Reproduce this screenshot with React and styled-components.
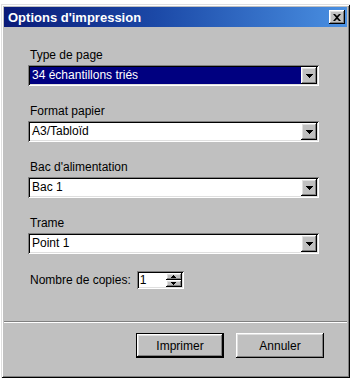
import styled, { createGlobalStyle, css } from 'styled-components'

const Global = createGlobalStyle`
  html, body {
    margin: 0;
    padding: 0;
    background: #ffffff;
  }
  body {
    font-family: "Liberation Sans", Arial, sans-serif;
    font-size: 12px;
    color: #000;
  }
`

/* bevels, Windows classic */
const raised = css`
  box-shadow:
    inset -1px -1px #000000,
    inset 1px 1px #ffffff,
    inset -2px -2px #808080,
    inset 2px 2px #dfdfdf;
`

const sunken = css`
  box-shadow:
    inset 1px 1px #808080,
    inset -1px -1px #ffffff,
    inset 2px 2px #000000,
    inset -2px -2px #dfdfdf;
`

const Window = styled.div`
  box-sizing: border-box;
  width: 349px;
  height: 374px;
  margin: 4px 0 0 1px;
  padding: 3px;
  background: #c0c0c0;
  display: flex;
  flex-direction: column;
  box-shadow:
    inset 1px 1px #dfdfdf,
    inset -1px -1px #000000,
    inset 2px 2px #ffffff,
    inset -2px -2px #808080;
`

const TitleBar = styled.div`
  height: 20px;
  flex: none;
  display: flex;
  align-items: center;
  justify-content: space-between;
  padding: 0 2px 0 4px;
  background: linear-gradient(to right, #0a1a78 0%, #1c4aa8 45%, #4a90e2 100%);
`

const Title = styled.span`
  color: #fff;
  font-weight: bold;
  font-size: 13px;
  letter-spacing: 0;
`

const CloseButton = styled.div`
  width: 16px;
  height: 14px;
  background: #c0c0c0;
  display: flex;
  align-items: center;
  justify-content: center;
  ${raised}
`

const Content = styled.div`
  flex: 1;
  padding: 21px 0 0 24px;
  display: flex;
  flex-direction: column;
`

const Group = styled.div`
  display: flex;
  flex-direction: column;
  gap: 3px;
  margin-bottom: 18px;
`

const Label = styled.div`
  height: 14px;
  line-height: 14px;
  padding-left: 2px;
`

const Field = styled.div`
  box-sizing: border-box;
  width: ${p => p.$width}px;
  height: ${p => p.$height}px;
  padding: 2px;
  background: #ffffff;
  display: flex;
  ${sunken}
`

const Value = styled.div`
  flex: 1;
  padding-left: 2px;
  line-height: 17px;
  white-space: nowrap;
  background: ${p => (p.$selected ? '#000080' : '#ffffff')};
  color: ${p => (p.$selected ? '#ffffff' : '#000000')};
`

const ArrowButton = styled.div`
  width: 16px;
  flex: none;
  background: #c0c0c0;
  display: flex;
  align-items: center;
  justify-content: center;
  ${raised}
`

const CopiesRow = styled.div`
  display: flex;
  align-items: center;
  gap: 6px;
  margin-top: -1px;
  padding-left: 2px;
`

const SpinValue = styled.div`
  flex: 1;
  padding-left: 1px;
  line-height: 14px;
`

const SpinButtons = styled.div`
  width: 16px;
  flex: none;
  display: flex;
  flex-direction: column;
`

const SpinButton = styled.div`
  flex: 1;
  background: #c0c0c0;
  display: flex;
  align-items: center;
  justify-content: center;
  ${raised}
`

const Separator = styled.div`
  height: 0;
  border-top: 1px solid #808080;
  border-bottom: 1px solid #ffffff;
`

const Footer = styled.div`
  flex: none;
  display: flex;
  justify-content: flex-end;
  gap: 12px;
  padding: 10px 23px 17px 0;
`

const Button = styled.div`
  box-sizing: border-box;
  width: 88px;
  height: 25px;
  background: #c0c0c0;
  display: flex;
  align-items: center;
  justify-content: center;
  ${p =>
    p.$default
      ? css`
          border: 1px solid #000;
          box-shadow:
            inset -1px -1px #000000,
            inset 1px 1px #ffffff,
            inset -2px -2px #808080,
            inset 2px 2px #dfdfdf;
        `
      : raised}
`

function Arrow({ up }) {
  return (
    <svg width="7" height="4" viewBox="0 0 7 4" style={up ? { transform: 'rotate(180deg)' } : undefined}>
      <path d="M0 0h7v1H6v1H5v1H4v1H3V3H2V2H1V1H0z" fill="#000" />
    </svg>
  )
}

function SmallArrow({ up }) {
  return (
    <svg width="5" height="3" viewBox="0 0 5 3" style={up ? { transform: 'rotate(180deg)' } : undefined}>
      <path d="M0 0h5v1H4v1H3v1H2V2H1V1H0z" fill="#000" />
    </svg>
  )
}

function Select({ label, value, selected }) {
  return (
    <Group>
      <Label>{label}</Label>
      <Field $width={291} $height={21}>
        <Value $selected={selected}>{value}</Value>
        <ArrowButton>
          <Arrow />
        </ArrowButton>
      </Field>
    </Group>
  )
}

const selects = [
  { label: 'Type de page', value: '34 échantillons triés', selected: true },
  { label: 'Format papier', value: 'A3/Tabloïd' },
  { label: "Bac d'alimentation", value: 'Bac 1' },
  { label: 'Trame', value: 'Point 1' },
]

export default function App() {
  return (
    <>
      <Global />
      <Window>
        <TitleBar>
          <Title>Options d'impression</Title>
          <CloseButton>
            <svg width="8" height="7" viewBox="0 0 8 7">
              <path d="M0 0h2l2 2 2-2h2L5 3.5 8 7H6L4 5 2 7H0l3-3.5z" fill="#000" />
            </svg>
          </CloseButton>
        </TitleBar>
        <Content>
          {selects.map(s => (
            <Select key={s.label} {...s} />
          ))}
          <CopiesRow>
            <span>Nombre de copies:</span>
            <Field $width={47} $height={18}>
              <SpinValue>1</SpinValue>
              <SpinButtons>
                <SpinButton>
                  <SmallArrow up />
                </SpinButton>
                <SpinButton>
                  <SmallArrow />
                </SpinButton>
              </SpinButtons>
            </Field>
          </CopiesRow>
        </Content>
        <Separator />
        <Footer>
          <Button $default>Imprimer</Button>
          <Button>Annuler</Button>
        </Footer>
      </Window>
    </>
  )
}
